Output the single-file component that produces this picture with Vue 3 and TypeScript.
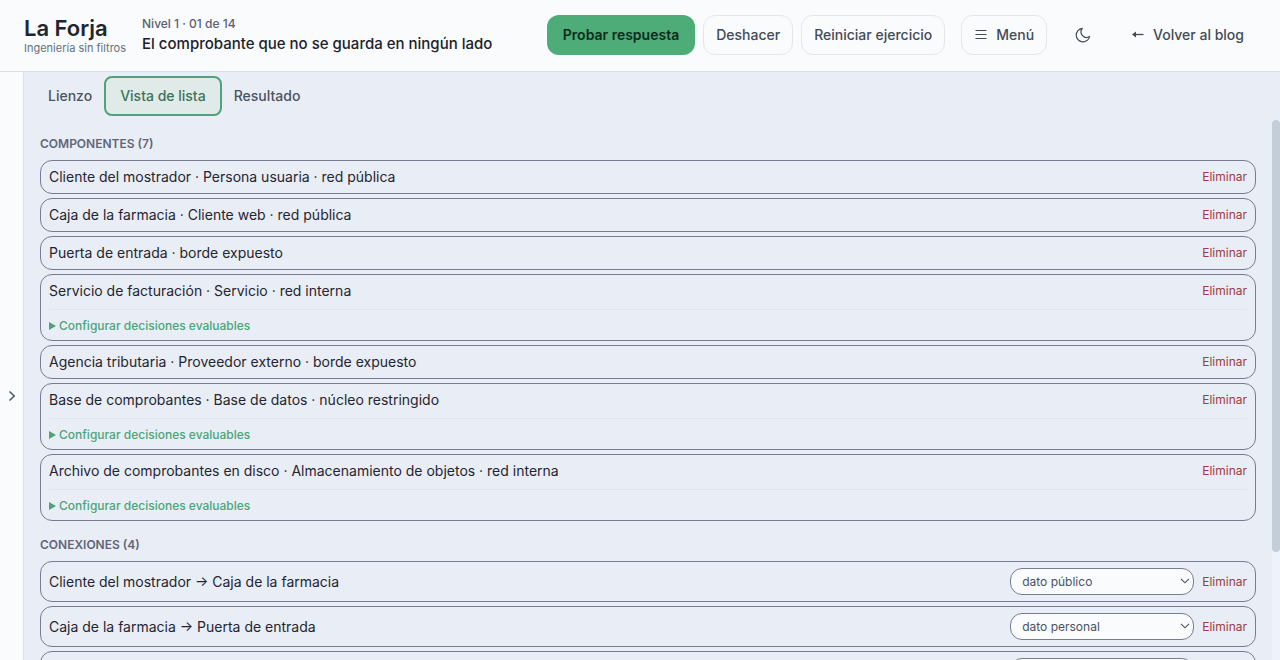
<script setup lang="ts">
import { ref } from 'vue'

interface Component {
  id: string
  label: string
  configurable?: boolean
}

interface Connection {
  id: string
  from: string
  to: string
  data: string
}

const tabs = ['Lienzo', 'Vista de lista', 'Resultado']
const activeTab = ref('Vista de lista')

const components = ref<Component[]>([
  { id: 'cliente', label: 'Cliente del mostrador · Persona usuaria · red pública' },
  { id: 'caja', label: 'Caja de la farmacia · Cliente web · red pública' },
  { id: 'puerta', label: 'Puerta de entrada · borde expuesto' },
  { id: 'servicio', label: 'Servicio de facturación · Servicio · red interna', configurable: true },
  { id: 'agencia', label: 'Agencia tributaria · Proveedor externo · borde expuesto' },
  { id: 'base', label: 'Base de comprobantes · Base de datos · núcleo restringido', configurable: true },
  { id: 'archivo', label: 'Archivo de comprobantes en disco · Almacenamiento de objetos · red interna', configurable: true },
])

const dataKinds = ['dato público', 'dato personal']

const connections = ref<Connection[]>([
  { id: 'c1', from: 'Cliente del mostrador', to: 'Caja de la farmacia', data: 'dato público' },
  { id: 'c2', from: 'Caja de la farmacia', to: 'Puerta de entrada', data: 'dato personal' },
  { id: 'c3', from: 'Puerta de entrada', to: 'Servicio de facturación', data: 'dato personal' },
  { id: 'c4', from: 'Servicio de facturación', to: 'Base de comprobantes', data: 'dato personal' },
])

function removeComponent(id: string) {
  components.value = components.value.filter((c) => c.id !== id)
}

function removeConnection(id: string) {
  connections.value = connections.value.filter((c) => c.id !== id)
}
</script>

<template>
  <div class="app">
    <header class="topbar">
      <div class="brand">
        <span class="brand-name">La Forja</span>
        <span class="brand-tag">Ingeniería sin filtros</span>
      </div>
      <div class="exercise">
        <span class="level">Nivel 1 · 01 de 14</span>
        <h1 class="title">El comprobante que no se guarda en ningún lado</h1>
      </div>
      <div class="actions">
        <div class="group">
          <button type="button" class="btn primary">Probar respuesta</button>
          <button type="button" class="btn outline">Deshacer</button>
          <button type="button" class="btn outline">Reiniciar ejercicio</button>
        </div>
        <button type="button" class="btn outline with-icon">
          <svg width="14" height="14" viewBox="0 0 14 14" fill="none" stroke="currentColor" stroke-width="1" aria-hidden="true">
            <path d="M1.5 2.5h11M1.5 6.5h11M1.5 10.5h11" />
          </svg>
          Menú
        </button>
        <button type="button" class="btn icon-only" aria-label="Cambiar tema">
          <svg width="18" height="18" viewBox="0 0 24 24" fill="none" stroke="currentColor" stroke-width="1.6" stroke-linejoin="round" aria-hidden="true">
            <path d="M11 3.2A7.4 7.4 0 0 0 20.8 14A9 9 0 1 1 11 3.2Z" />
          </svg>
        </button>
        <a href="#" class="btn link with-icon">
          <svg width="14" height="14" viewBox="0 0 14 14" aria-hidden="true">
            <path d="M4 6.5h8.5" fill="none" stroke="currentColor" stroke-width="1.3" />
            <path d="M1 6.5L5 3.5V9.5Z" fill="currentColor" />
          </svg>
          Volver al blog
        </a>
      </div>
    </header>

    <div class="body">
      <aside class="rail">
        <button type="button" class="rail-toggle" aria-label="Abrir panel">
          <svg width="8" height="12" viewBox="0 0 8 12" fill="none" stroke="currentColor" stroke-width="1.5" aria-hidden="true">
            <path d="M1.5 1.5L6.2 6L1.5 10.5" />
          </svg>
        </button>
      </aside>

      <main class="workspace">
        <nav class="tabs">
          <button
            v-for="tab in tabs"
            :key="tab"
            type="button"
            class="tab"
            :class="{ active: tab === activeTab }"
            @click="activeTab = tab"
          >{{ tab }}</button>
        </nav>

        <div class="scroll-area">
          <div class="lists">
            <section>
              <h2 class="heading">Componentes ({{ components.length }})</h2>
              <ul class="rows">
                <li v-for="c in components" :key="c.id" class="row">
                  <div class="line">
                    <span class="label">{{ c.label }}</span>
                    <button type="button" class="remove" @click="removeComponent(c.id)">Eliminar</button>
                  </div>
                  <details v-if="c.configurable" class="config">
                    <summary>
                      <svg class="marker" width="7" height="8" viewBox="0 0 7 8" fill="currentColor" aria-hidden="true">
                        <path d="M0 0L7 4L0 8Z" />
                      </svg>
                      Configurar decisiones evaluables
                    </summary>
                  </details>
                </li>
              </ul>
            </section>

            <section>
              <h2 class="heading">Conexiones ({{ connections.length }})</h2>
              <ul class="rows">
                <li v-for="c in connections" :key="c.id" class="row">
                  <div class="line">
                    <label class="label" :for="c.id">{{ c.from }} → {{ c.to }}</label>
                    <span class="select-wrap">
                      <select :id="c.id" v-model="c.data" class="select">
                        <option v-for="k in dataKinds" :key="k">{{ k }}</option>
                      </select>
                      <svg class="chevron" width="10" height="6" viewBox="0 0 10 6" fill="none" stroke="currentColor" stroke-width="1.1" aria-hidden="true">
                        <path d="M1 0.8L5 4.8L9 0.8" />
                      </svg>
                    </span>
                    <button type="button" class="remove" @click="removeConnection(c.id)">Eliminar</button>
                  </div>
                </li>
              </ul>
            </section>
          </div>
          <div class="scrollbar" aria-hidden="true"><div class="thumb"></div></div>
        </div>
      </main>
    </div>
  </div>
</template>

<style>
body {
  margin: 0;
  overflow: hidden;
}
</style>

<style scoped>
.app {
  display: flex;
  flex-direction: column;
  height: 100vh;
  background: #e9edf6;
  color: #1f2630;
  font-family: Inter, "Liberation Sans", sans-serif;
  font-size: 14px;
  line-height: 20px;
}

button,
select {
  font: inherit;
  color: inherit;
}

.topbar {
  display: flex;
  align-items: center;
  gap: 16px;
  padding: 15px 24px 16px;
  background: #f9fbfd;
  border-bottom: 1px solid #d9dee4;
}

.brand,
.exercise {
  display: flex;
  flex-direction: column;
  white-space: nowrap;
}

.exercise {
  gap: 2px;
}

.brand-name {
  font-size: 22px;
  line-height: 26px;
  font-weight: 600;
  color: #20262d;
}

.brand-tag {
  font-size: 11px;
  line-height: 14px;
  color: #68707c;
}

.level {
  font-size: 12px;
  line-height: 16px;
  font-weight: 500;
  color: #596170;
}

.title {
  margin: 0;
  font-size: 15px;
  line-height: 20px;
  font-weight: 500;
  color: #1c2229;
}

.actions {
  display: flex;
  align-items: center;
  gap: 16px;
  margin-left: auto;
}

.group {
  display: flex;
  gap: 8px;
}

.btn {
  box-sizing: border-box;
  display: inline-flex;
  align-items: center;
  height: 40px;
  padding: 0 12px;
  border: 1px solid transparent;
  border-radius: 12px;
  background: none;
  color: #434b56;
  font-size: 14px;
  font-weight: 500;
  white-space: nowrap;
  text-decoration: none;
  cursor: pointer;
}

.btn.outline {
  border-color: #e3e6ed;
}

.btn.primary {
  padding: 0 15px;
  background: #4dac78;
  color: #0d2b1b;
  font-weight: 600;
}

.btn.link {
  border: 0;
}

.with-icon {
  gap: 8px;
}

.btn.icon-only {
  width: 40px;
  padding: 0;
  justify-content: center;
}

.body {
  display: flex;
  flex: 1;
  min-height: 0;
}

.rail {
  display: flex;
  align-items: center;
  width: 23px;
  padding-top: 60px;
  background: #f9fbfd;
  border-right: 1px solid #dce0e8;
}

.rail-toggle {
  display: flex;
  justify-content: center;
  width: 100%;
  padding: 8px 0;
  border: 0;
  background: none;
  color: #4c545f;
}

.workspace {
  display: flex;
  flex-direction: column;
  flex: 1;
  min-width: 0;
}

.tabs {
  display: flex;
  padding: 4px 12px;
}

.tab {
  box-sizing: border-box;
  height: 40px;
  padding: 0 12px;
  border: 0;
  border-radius: 8px;
  background: none;
  color: #4b5261;
  font-weight: 500;
  cursor: pointer;
}

.tab.active {
  padding: 0 14px;
  border: 2px solid #549f7c;
  background: #dfeae9;
  color: #3d735a;
}

.scroll-area {
  display: flex;
  flex: 1;
  min-height: 0;
}

.lists {
  flex: 1;
  min-width: 0;
  padding: 16px 16px 0;
  overflow: hidden;
}

.scrollbar {
  width: 8px;
  background: #eff2f8;
}

.thumb {
  height: 80%;
  border-radius: 4px;
  background: #c4ced9;
}

.heading {
  margin: 0 0 8px;
  font-size: 12px;
  line-height: 16px;
  font-weight: 600;
  text-transform: uppercase;
  color: #5f667a;
}

.rows {
  display: flex;
  flex-direction: column;
  gap: 4px;
  margin: 0 0 16px;
  padding: 0;
  list-style: none;
}

.row {
  padding: 6px 8px;
  border: 1px solid #777c91;
  border-radius: 12px;
}

.line {
  display: flex;
  align-items: center;
  gap: 8px;
}

.label {
  flex: 1;
}

.remove {
  padding: 0;
  border: 0;
  background: none;
  color: #a03a40;
  font-size: 12px;
  cursor: pointer;
}

.config {
  margin-top: 8px;
  padding-top: 8px;
  border-top: 1px solid #dfe3ea;
  color: #4da477;
  font-size: 12px;
  line-height: 16px;
  font-weight: 500;
}

.config summary {
  display: flex;
  align-items: center;
  gap: 3px;
  list-style: none;
  cursor: pointer;
}

.select-wrap {
  position: relative;
  display: flex;
}

.select {
  appearance: none;
  width: 184px;
  height: 27px;
  padding: 0 24px 0 11px;
  border: 1px solid #777c91;
  border-radius: 12px;
  background: #f9fbfd;
  color: #4b5261;
  font-size: 12px;
}

.chevron {
  position: absolute;
  right: 4px;
  top: 10px;
  color: #4b5261;
  pointer-events: none;
}
</style>
